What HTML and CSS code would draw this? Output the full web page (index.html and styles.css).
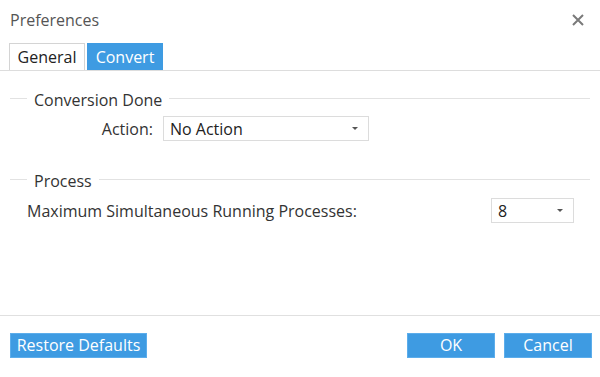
FILE: index.html
```html
<!DOCTYPE html>
<html lang="en">
<head>
  <meta charset="UTF-8" />
  <title>Preferences</title>
  <link rel="stylesheet" href="styles.css">
</head>
<body>
  <div class="dialog">
    <div class="header">
      <span class="title">Preferences</span>
      <svg class="close" width="12" height="12" viewBox="0 0 12 12">
        <path d="M1 1 L11 11 M11 1 L1 11" stroke="#7a7a7a" stroke-width="2" />
      </svg>
    </div>

    <div class="tabs">
      <div class="tab">General</div>
      <div class="tab active">Convert</div>
    </div>

    <div class="content">
      <div class="group">
        <div class="legend"><span class="line short"></span><span class="legend-text">Conversion Done</span><span class="line"></span></div>
        <div class="row action-row">
          <label class="action-label">Action:</label>
          <div class="select wide"><span>No Action</span><span class="caret"></span></div>
        </div>
      </div>

      <div class="group">
        <div class="legend"><span class="line short"></span><span class="legend-text">Process</span><span class="line"></span></div>
        <div class="row process-row">
          <label>Maximum Simultaneous Running Processes:</label>
          <div class="select narrow"><span>8</span><span class="caret"></span></div>
        </div>
      </div>
    </div>

    <div class="footer">
      <button class="btn restore">Restore Defaults</button>
      <div class="right-buttons">
        <button class="btn small">OK</button>
        <button class="btn small">Cancel</button>
      </div>
    </div>
  </div>
</body>
</html>
```

FILE: styles.css
```css
body {
  margin: 0;
  background: #fff;
  font-family: 'Open Sans', sans-serif;
  color: #333;
}
.dialog {
  width: 600px;
  height: 377px;
  display: flex;
  flex-direction: column;
}
.header {
  height: 43px;
  padding: 0 16px 4px 10px;
  display: flex;
  justify-content: space-between;
  align-items: center;
  box-sizing: border-box;
}
.title {
  font-size: 16px;
  color: #555;
}
.tabs {
  display: flex;
  gap: 2px;
  padding-left: 9px;
  border-bottom: 1px solid #ddd;
}
.tab {
  height: 27px;
  width: 76px;
  box-sizing: border-box;
  border: 1px solid #d4d4d4;
  border-bottom: none;
  font-size: 16px;
  color: #222;
  display: flex;
  align-items: center;
  justify-content: center;
}
.tab.active {
  background: #3e9be2;
  border-color: #3e9be2;
  color: #fff;
}
.content {
  flex: 1;
  padding: 17px 10px 0 10px;
}
.legend {
  display: flex;
  align-items: center;
  height: 20px;
}
.line {
  flex: 1;
  height: 1px;
  background: #e2e2e2;
}
.line.short {
  flex: 0 0 17px;
}
.legend-text {
  padding: 0 7px;
  font-size: 16px;
  color: #333;
  margin-top: 4px;
}
.row {
  display: flex;
  align-items: center;
  font-size: 16px;
  color: #333;
}
.action-row {
  margin-top: 8px;
  gap: 10px;
}
.action-label {
  width: 143px;
  text-align: right;
}
.process-row {
  margin-top: 9px;
  padding-left: 17px;
  justify-content: space-between;
  padding-right: 16px;
}
.select {
  height: 25px;
  box-sizing: border-box;
  border: 1px solid #dcdcdc;
  display: flex;
  align-items: center;
  justify-content: space-between;
  padding: 0 10px 0 6px;
  font-size: 16px;
  color: #222;
}
.select.wide {
  width: 206px;
}
.select.narrow {
  width: 83px;
}
.caret {
  width: 0;
  height: 0;
  border-left: 3px solid transparent;
  border-right: 3px solid transparent;
  border-top: 3px solid #555;
}
.group + .group {
  margin-top: 28px;
}
.footer {
  border-top: 1px solid #e0e0e0;
  height: 62px;
  display: flex;
  justify-content: space-between;
  align-items: flex-start;
  padding: 17px 8px 0 10px;
  box-sizing: border-box;
}
.right-buttons {
  display: flex;
  gap: 9px;
}
.btn {
  height: 25px;
  padding: 0;
  background: #3e9be2;
  border: 1px solid #5cadeb;
  color: #fff;
  font-family: 'Open Sans', sans-serif;
  font-size: 16px;
  line-height: 23px;
}
.btn.restore {
  width: 137px;
}
.btn.small {
  width: 88px;
}
```
